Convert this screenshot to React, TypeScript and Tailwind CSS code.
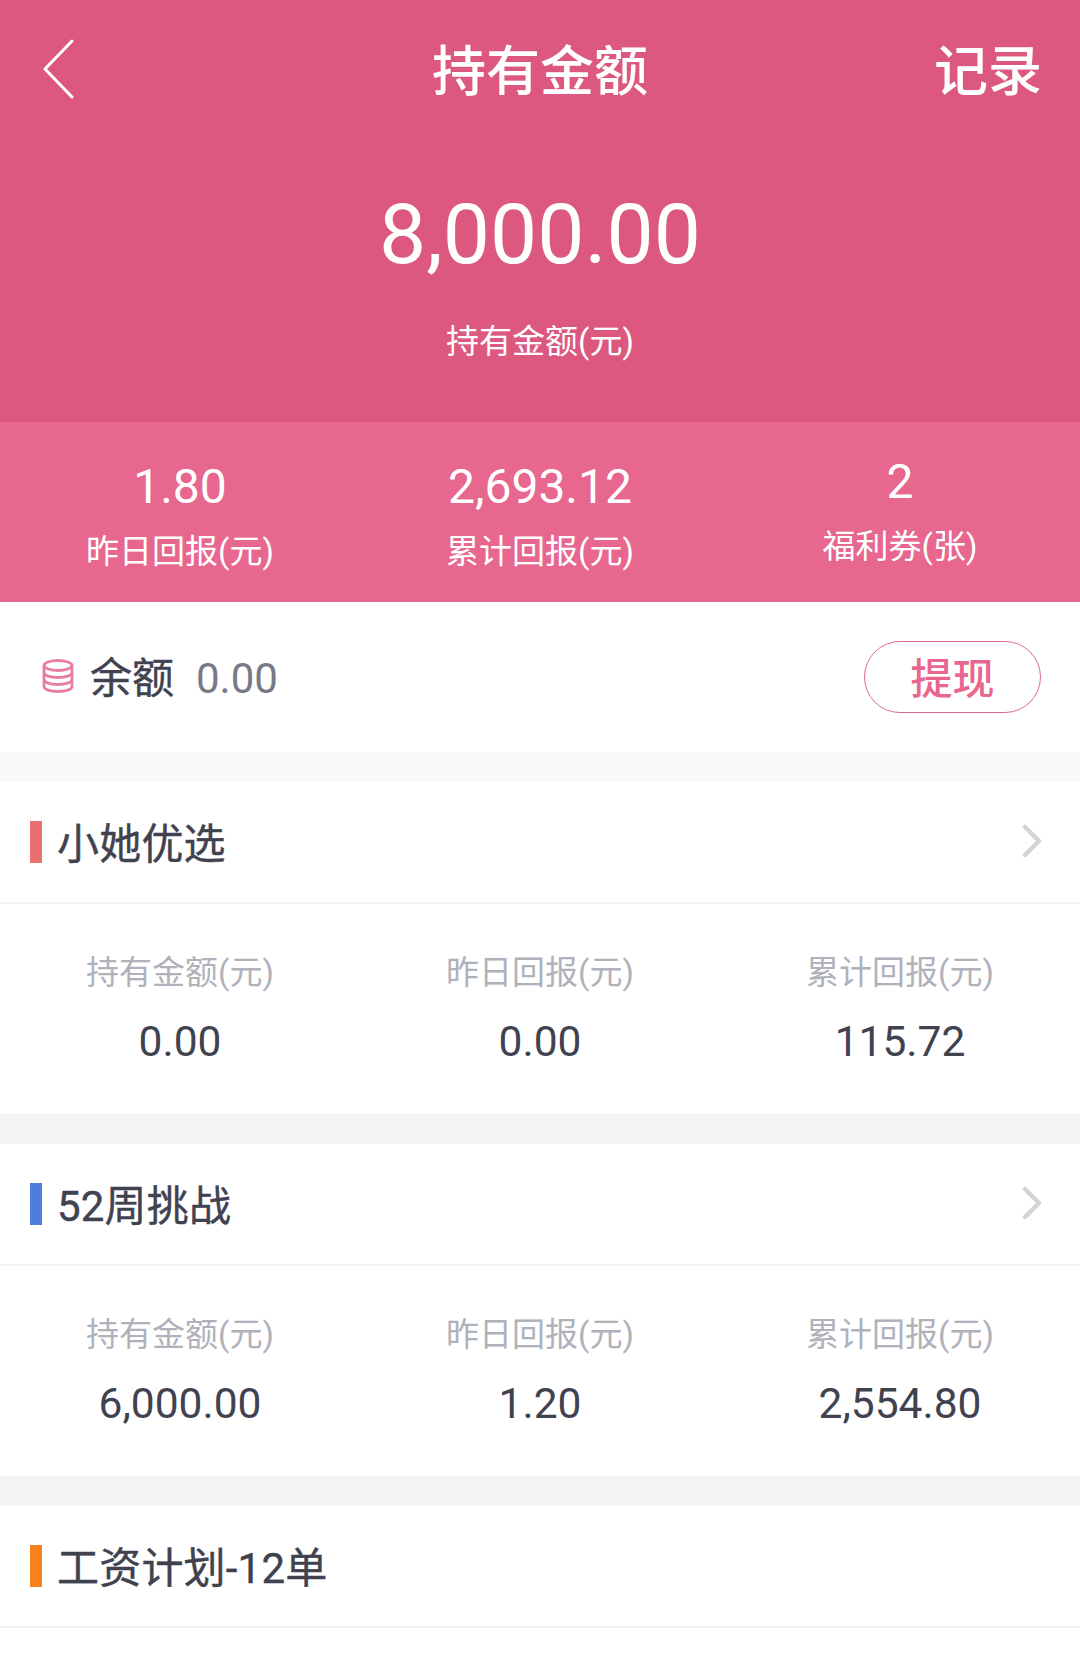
const font = "font-['Roboto','Noto_Sans_CJK_SC',sans-serif]";

interface Stat {
  label: string;
  value: string;
}

interface Plan {
  title: string;
  bar: string;
  arrow: boolean;
  stats?: Stat[];
}

const plans: Plan[] = [
  {
    title: "小她优选",
    bar: "bg-[#ea6f6f]",
    arrow: true,
    stats: [
      { label: "持有金额(元)", value: "0.00" },
      { label: "昨日回报(元)", value: "0.00" },
      { label: "累计回报(元)", value: "115.72" },
    ],
  },
  {
    title: "52周挑战",
    bar: "bg-[#4f7ddd]",
    arrow: true,
    stats: [
      { label: "持有金额(元)", value: "6,000.00" },
      { label: "昨日回报(元)", value: "1.20" },
      { label: "累计回报(元)", value: "2,554.80" },
    ],
  },
  { title: "工资计划-12单", bar: "bg-[#f9821e]", arrow: false },
];

function CoinsIcon() {
  return (
    <svg width="32" height="36" viewBox="0 0 32 36" fill="none" stroke="#e87f9f" strokeWidth="2.8">
      <ellipse cx="16" cy="6.500" rx="14" ry="5" />
      <path d="M2 6.500v7c0 3 6.300 5 14 5s14-2 14-5v-7" />
      <path d="M2 13.500v7c0 3 6.300 5 14 5s14-2 14-5v-7" />
      <path d="M2 20.500v7c0 3 6.300 5 14 5s14-2 14-5v-7" />
    </svg>
  );
}

function Chevron() {
  return (
    <svg className="mb-[2px]" width="20" height="34" viewBox="0 0 20 34" fill="none" stroke="#d2d4da" strokeWidth="4.500" strokeLinecap="round" strokeLinejoin="round">
      <path d="M3 3l14 14-14 14" />
    </svg>
  );
}

function PlanCard({ plan }: { plan: Plan }) {
  return (
    <section className="bg-white">
      <div className="flex h-[122px] items-center border-b-2 border-[#f2f2f2] pr-[38px] pl-[30px]">
        <div className={`h-[42px] w-3 ${plan.bar}`} />
        <h3 className="ml-[15px] flex-1 pt-[6px] text-[42px] leading-none tracking-[0.2px] text-[#40424f] [-webkit-text-stroke:0.4px_#40424f]">{plan.title}</h3>
        {plan.arrow && <Chevron />}
      </div>
      {plan.stats && (
        <div className="grid h-[210px] grid-cols-3 pt-[49px] text-center">
          {plan.stats.map((s) => (
            <div key={s.label}>
              <p className="text-[33px] leading-[40px] text-[#b0b1bb]">{s.label}</p>
              <p className="mt-[29px] text-[42.500px] leading-[40px] text-[#40424f]">{s.value}</p>
            </div>
          ))}
        </div>
      )}
    </section>
  );
}

export default function App() {
  return (
    <div className={`h-[1675px] w-[1080px] overflow-hidden bg-white ${font}`}>
      <header className="h-[422px] bg-[#dc587e] text-white">
        <div className="flex h-[142px] items-center justify-between pt-[4px] pr-[38px] pl-[38px]">
          <div className="flex-1">
            <svg className="mb-[8px] ml-[4px]" width="32" height="60" viewBox="0 0 32 60" fill="none" stroke="white" strokeWidth="3" strokeLinecap="round" strokeLinejoin="round">
              <path d="M30 2L3 30l27 28" />
            </svg>
          </div>
          <h1 className="text-[54px] leading-none font-medium">持有金额</h1>
          <div className="flex-1 text-right text-[54px] leading-none font-medium">记录</div>
        </div>
        <p className="mt-[38px] text-center text-[84px] leading-[110px]">8,000.00</p>
        <p className="mt-[32px] text-center text-[33px] leading-[40px]">持有金额(元)</p>
      </header>

      <div className="grid h-[180px] grid-cols-3 bg-[#e7678f] text-center text-white">
        <div className="pt-[40px]">
          <p className="text-[48px] leading-[50px]">1.80</p>
          <p className="mt-[20px] text-[33px] leading-[40px]">昨日回报(元)</p>
        </div>
        <div className="pt-[40px]">
          <p className="text-[48px] leading-[50px]">2,693.12</p>
          <p className="mt-[20px] text-[33px] leading-[40px]">累计回报(元)</p>
        </div>
        <div className="pt-[35px]">
          <p className="text-[48px] leading-[50px]">2</p>
          <p className="mt-[20px] text-[33px] leading-[40px]">福利券(张)</p>
        </div>
      </div>

      <div className="flex h-[150px] items-center pr-[39px] pl-[42px]">
        <CoinsIcon />
        <span className="ml-[16px] pt-[4px] text-[42px] leading-none text-[#40424f] [-webkit-text-stroke:0.4px_#40424f]">余额</span>
        <span className="ml-[22px] flex-1 pt-[4px] text-[42px] leading-none text-[#777986]">0.00</span>
        <button className="flex h-[72px] w-[177px] items-center justify-center rounded-full border border-[#dd6a8d] pt-[6px] text-[42px] leading-none font-medium text-[#e7678f]">
          提现
        </button>
      </div>

      <div className="h-[30px] bg-[#fafafa]" />
      <PlanCard plan={plans[0]} />
      <div className="h-[30px] bg-[#f5f5f5]" />
      <PlanCard plan={plans[1]} />
      <div className="h-[30px] bg-[#f5f5f5]" />
      <PlanCard plan={plans[2]} />
    </div>
  );
}
